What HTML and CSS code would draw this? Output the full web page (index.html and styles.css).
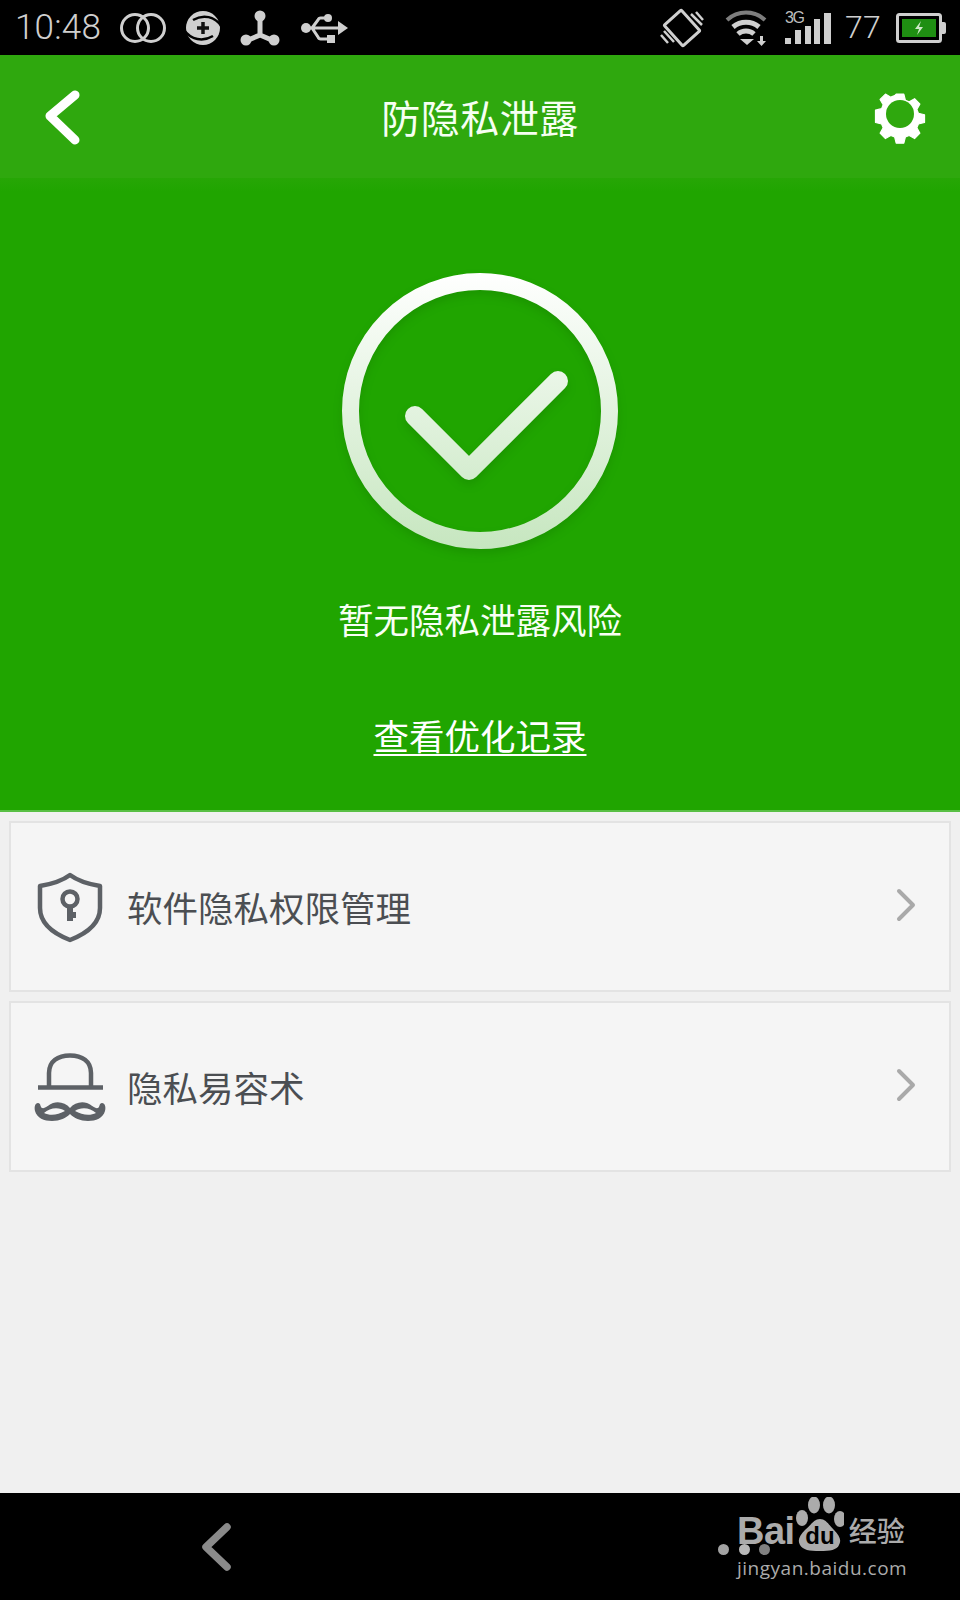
FILE: index.html
```html
<!DOCTYPE html>
<html lang="zh">
<head>
<meta charset="utf-8">
<title>防隐私泄露</title>
<link rel="stylesheet" href="styles.css">
</head>
<body>
<div class="screen">
  <header class="statusbar">
    <div class="status-group">
      <span class="time">10:48</span>
      <svg class="si rings" viewBox="0 0 48 32"><circle cx="16" cy="16" r="13.5"/><circle cx="32" cy="16" r="13.5"/></svg>
      <svg class="si plus" viewBox="0 0 36 36">
        <circle class="fill" cx="18" cy="18" r="17"/>
        <path class="cut" d="M37 17C30 6 18 4 8 10M-1 20c7 10 19 12 29 6"/>
        <path class="dark" d="M18 12v12M12 18h12"/>
      </svg>
      <svg class="si nodes" viewBox="0 0 40 36">
        <path class="line" d="M20 6v19L6 31M20 25l14 6"/>
        <circle class="fill" cx="20" cy="6" r="5.500"/><circle class="fill" cx="6" cy="30" r="5.500"/><circle class="fill" cx="34" cy="30" r="5.500"/>
      </svg>
      <svg class="si usb" viewBox="0 0 48 32">
        <circle class="fill" cx="6" cy="16" r="5"/>
        <path class="line-mid" d="M6 16h34M12 16l6-8a3 3 0 0 1 3-2h6M12 16l6 9a3 3 0 0 0 3 2h8"/>
        <circle class="fill" cx="28" cy="6" r="4"/><rect class="fill" x="27" y="23" width="8" height="8"/>
        <path class="fill" d="M38 9l10 7-10 7z"/>
      </svg>
    </div>
    <div class="status-group right">
      <svg class="si vibrate" viewBox="0 0 44 40">
        <rect class="line-mid" x="10.500" y="6" width="23" height="28" rx="1" transform="rotate(-42 22 20)"/>
        <path class="line-thin" d="M1 27l7 8M4 23l10 11M36 4l7 8M31 6l11 11"/>
      </svg>
      <svg class="si wifi" viewBox="0 0 44 36">
        <path class="wifi-dim" d="M2 10a28 28 0 0 1 38 0"/>
        <path class="line" d="M8 17a20 20 0 0 1 26 0M13 24a12 12 0 0 1 16 0"/>
        <path class="fill" d="M15 29h14l-7 6zM35 26h3v5h3l-4.500 5-4.500-5h3z"/>
      </svg>
      <div class="signal">
        <span class="net">3G</span>
        <i class="bar b1"></i><i class="bar b2"></i><i class="bar b3"></i><i class="bar b4"></i><i class="bar b5"></i>
      </div>
      <span class="level">77</span>
      <svg class="si battery" viewBox="0 0 50 30">
        <rect class="batt-shell" x="1.500" y="1.500" width="43" height="27" rx="2"/>
        <path class="fill" d="M46 9h2a2 2 0 0 1 2 2v8a2 2 0 0 1-2 2h-2z"/>
        <rect class="batt-level" x="6" y="6" width="34" height="18"/>
        <path class="batt-bolt" d="M25 8l-6 8h4l-2 6 6-8h-4z"/>
      </svg>
    </div>
  </header>

  <nav class="toolbar">
    <svg class="back" viewBox="0 0 40 60"><path d="M31 9L6 30l25 24"/></svg>
    <h1 class="title">防隐私泄露</h1>
    <svg class="gear" viewBox="0 0 60 60">
      <path d="M25 4h10l2 8 5 2 7-4 7 7-4 7 2 5 8 2v10l-8 2-2 5 4 7-7 7-7-4-5 2-2 8H25l-2-8-5-2-7 4-7-7 4-7-2-5-8-2V25l8-2 2-5-4-7 7-7 7 4 5-2z" transform="translate(7 7) scale(.767)"/>
      <circle class="gear-hole" cx="30" cy="30" r="14"/>
    </svg>
  </nav>

  <section class="hero">
    <svg class="status-mark" viewBox="0 0 300 300">
      <defs>
        <linearGradient id="mark" gradientUnits="userSpaceOnUse" x1="0" y1="11" x2="0" y2="289">
          <stop offset="0" stop-color="#ffffff"/>
          <stop offset="1" stop-color="#c6e6bf"/>
        </linearGradient>
      </defs>
      <circle class="ring" cx="150" cy="150" r="129.500"/>
      <path class="tick" d="M85 155l54 54 89-89"/>
    </svg>
    <p class="hero-text">暂无隐私泄露风险</p>
    <a class="hero-link" href="#">查看优化记录</a>
  </section>

  <main class="list">
    <div class="card">
      <svg class="card-icon" viewBox="0 0 72 72">
        <path class="icon-line" d="M36 4c8 6 18 9 30 11v22c0 15-12 25-30 32C18 62 6 52 6 37V15c12-2 22-5 30-11z"/>
        <circle class="icon-line" cx="36" cy="28" r="7.500"/>
        <path class="icon-line thick" d="M36 36v14M36 44h6"/>
      </svg>
      <span class="card-label">软件隐私权限管理</span>
      <svg class="chevron" viewBox="0 0 24 36"><path d="M4 4l14 14L4 32"/></svg>
    </div>
    <div class="card">
      <svg class="card-icon" viewBox="0 0 72 72">
        <path class="icon-line" d="M15 36V22C15 10 24 4.500 36 4.500S57 10 57 22v14"/>
        <path class="icon-line" d="M4 36.500h65"/>
        <path class="icon-fill" d="M36 57C32 52 25 50 19 52 14 54 11 58 8 57 6 56 7 52 4 52 1 52 0 56 1 60 3 67 10 70 18 70 26 70 32 67 36 63 40 67 46 70 54 70 62 70 69 67 71 60 72 56 71 52 68 52 65 52 66 56 64 57 61 58 58 54 53 52 47 50 40 52 36 57z"/>
        <path class="icon-cut" d="M10 62C16 65 24 64 31 60 26 56 16 56 10 62zM62 62C56 65 48 64 41 60 46 56 56 56 62 62z"/>
      </svg>
      <span class="card-label">隐私易容术</span>
      <svg class="chevron" viewBox="0 0 24 36"><path d="M4 4l14 14L4 32"/></svg>
    </div>
  </main>

  <footer class="navbar">
    <svg class="nav-back" viewBox="0 0 36 52"><path d="M28 6L7 26l21 20"/></svg>
    <div class="watermark">
      <div class="wm-top">
        <span class="wm-dot d1"></span><span class="wm-dot d2"></span><span class="wm-dot d3"></span>
        <span class="wm-bai">Bai</span>
        <svg class="wm-paw" viewBox="0 0 48 54">
          <ellipse cx="6" cy="21" rx="6" ry="8"/><ellipse cx="18" cy="8" rx="6" ry="8.500"/><ellipse cx="33" cy="8" rx="6" ry="8.500"/><ellipse cx="44" cy="22" rx="6" ry="8"/>
          <path d="M24 22c6 0 9 6 14 11 5 5 8 10 5 15-2 5-9 6-19 6-11 0-17-1-20-6-3-5 0-10 5-15 6-5 9-11 15-11z"/>
          <text class="wm-du" x="24" y="47" text-anchor="middle">du</text>
        </svg>
        <span class="wm-cn">经验</span>
      </div>
      <span class="wm-url">jingyan.baidu.com</span>
    </div>
  </footer>
</div>
</body>
</html>
```
FILE: styles.css
```css
* { box-sizing: border-box; }
html, body { margin: 0; padding: 0; background: #f0f0f0; }
body { font-family: "Noto Sans CJK SC", "Noto Sans", sans-serif; }

.screen { width: 960px; height: 1600px; display: flex; flex-direction: column; overflow: hidden; }

/* status bar */
.statusbar { height: 55px; flex: none; background: #000; display: flex; justify-content: space-between; align-items: center; padding: 0 14px 0 15px; color: #cfcfcf; }
.status-group { display: flex; align-items: center; }
.time, .level { font-family: Roboto, sans-serif; font-weight: 300; line-height: 55px; letter-spacing: .2px; }
.time { font-size: 35px; }
.level { font-size: 32px; margin-left: 14px; }
.si { display: block; flex: none; fill: none; }
.si .fill { fill: #cfcfcf; stroke: none; }
.si .line { stroke: #cfcfcf; stroke-width: 5; fill: none; }
.si .line-mid { stroke: #cfcfcf; stroke-width: 3; fill: none; }
.si .line-thin { stroke: #cfcfcf; stroke-width: 2.500; fill: none; }
.si .cut { stroke: #000; stroke-width: 2.500; fill: none; }
.si .dark { stroke: #111; stroke-width: 3.500; fill: none; }
.rings { width: 48px; height: 32px; margin-left: 18px; }
.rings circle { fill: none; stroke: #cfcfcf; stroke-width: 3; }
.plus { width: 36px; height: 36px; margin-left: 18px; }
.nodes { width: 40px; height: 36px; margin-left: 19px; }
.usb { width: 48px; height: 32px; margin-left: 20px; }
.vibrate { width: 44px; height: 40px; }
.wifi { width: 44px; height: 36px; margin-left: 21px; }
.wifi .wifi-dim { stroke: #7d7d7d; stroke-width: 4; fill: none; }
.signal { position: relative; width: 46px; height: 32px; margin-left: 16px; display: flex; align-items: flex-end; justify-content: space-between; }
.net { position: absolute; left: 0; top: -2px; font-family: "Liberation Sans Narrow", "Liberation Sans", sans-serif; font-size: 16px; line-height: 16px; letter-spacing: -1.500px; color: #bdbdbd; }
.bar { display: block; width: 6px; background: #cfcfcf; }
.b1 { height: 6px; } .b2 { height: 14px; } .b3 { height: 18px; } .b4 { height: 25px; } .b5 { height: 31px; width: 7px; }
.battery { width: 50px; height: 30px; margin-left: 15px; }
.batt-shell { fill: none; stroke: #cfcfcf; stroke-width: 3; }
.batt-level { fill: #1f8f12; }
.batt-bolt { fill: #cfe8c8; }

/* toolbar */
.toolbar { height: 123px; flex: none; position: relative; background: #2fa80e; display: flex; align-items: center; justify-content: space-between; padding: 0 30px 2px 44px; }
.title { margin: 0; position: absolute; left: 0; right: 0; text-align: center; font-size: 39px; line-height: 50px; font-weight: 400; color: #f6fff2; letter-spacing: .5px; }
.back { width: 40px; height: 60px; fill: none; stroke: #fff; stroke-width: 9; stroke-linecap: round; stroke-linejoin: round; }
.gear { width: 60px; height: 60px; fill: #fff; margin-top: -3px; stroke: #fff; stroke-width: 1.500; stroke-linejoin: round; }
.gear-hole { fill: #2fa80e; stroke: none; }

/* hero */
.hero { height: 634px; flex: none; background: linear-gradient(#27a606, #20a500 14px); border-bottom: 2px solid #58bf43; display: flex; flex-direction: column; align-items: center; padding-top: 83px; }
.status-mark { width: 300px; height: 300px; flex: none; filter: drop-shadow(0 5px 4px rgba(10, 90, 0, .2)); }
.ring { fill: none; stroke: url(#mark); stroke-width: 17; }
.tick { fill: none; stroke: url(#mark); stroke-width: 20; stroke-linecap: round; stroke-linejoin: round; }
.hero-text { margin: 33px 0 0; font-size: 35.500px; line-height: 50px; color: #f8fff5; }
.hero-link { margin-top: 66px; font-size: 35.500px; line-height: 50px; color: #fff; text-decoration: underline; text-underline-offset: 4px; text-decoration-thickness: 2px; }

/* list */
.list { flex: 1; padding: 9px 9px 0; display: flex; flex-direction: column; gap: 9px; }
.card { height: 171px; flex: none; background: #f5f5f5; border: 2px solid #e3e3e3; display: flex; align-items: center; padding: 0 30px 0 23px; }
.card-icon { width: 72px; height: 72px; flex: none; fill: none; }
.icon-line { fill: none; stroke: #5d6166; stroke-width: 4.500; stroke-linejoin: round; }
.icon-line.thick { stroke-width: 6; }
.icon-fill { fill: #5d6166; }
.icon-cut { fill: #f5f5f5; }
.card-label { margin-left: 21px; flex: 1; font-size: 35.500px; line-height: 50px; color: #4b4e52; }
.chevron { width: 24px; height: 36px; flex: none; fill: none; stroke: #a9a9a9; stroke-width: 4; stroke-linecap: round; stroke-linejoin: round; margin-top: -4px; }

/* nav bar */
.navbar { height: 107px; flex: none; background: #000; position: relative; display: flex; align-items: center; padding: 0 0 0 199px; }
.nav-back { width: 36px; height: 52px; fill: none; stroke: #8a8a8a; stroke-width: 7.500; stroke-linecap: round; stroke-linejoin: round; }

.watermark { position: absolute; left: 737px; top: 3px; width: 175px; height: 90px; color: #ababab; }
.wm-top { display: flex; align-items: flex-end; height: 60px; }
.wm-bai { font-family: "Liberation Sans", sans-serif; font-weight: 700; font-size: 38px; line-height: 38px; letter-spacing: -.5px; margin-bottom: 6px; }
.wm-paw { width: 48px; height: 54px; fill: #ababab; margin-left: 1px; margin-bottom: 5px; flex: none; }
.wm-du { font-family: "Liberation Sans", sans-serif; font-weight: 700; font-size: 24px; fill: #000; }
.wm-cn { font-size: 28px; line-height: 34px; font-weight: 500; margin-left: 5px; margin-bottom: 9px; white-space: nowrap; }
.wm-url { display: block; font-family: "Open Sans", sans-serif; font-size: 19px; line-height: 24px; white-space: nowrap; letter-spacing: .5px; }
.wm-dot { position: absolute; width: 11px; height: 11px; border-radius: 50%; top: 48px; background: #a3a3a3; }
.d1 { left: -19px; }
.d2 { left: 2px; background: rgba(255, 255, 255, .72); }
.d3 { left: 22px; background: rgba(255, 255, 255, .5); }
```
